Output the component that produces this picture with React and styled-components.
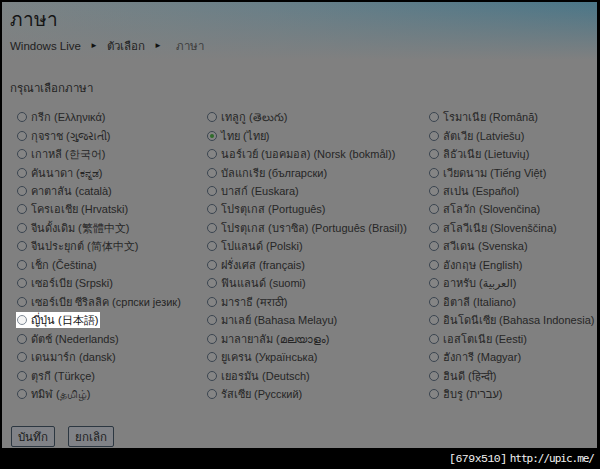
import React from 'react';
import styled, { createGlobalStyle } from 'styled-components';

const GlobalStyle = createGlobalStyle`
  html, body {
    margin: 0;
    padding: 0;
    background: #000;
  }
  body {
    font-family: "Liberation Sans", "DejaVu Sans", sans-serif;
  }
`;

const columns = [
  [
    'กรีก (Ελληνικά)',
    'กุจราช (ગુજરાતી)',
    'เกาหลี (한국어)',
    'คันนาดา (ಕನ್ನಡ)',
    'คาตาลัน (català)',
    'โครเอเชีย (Hrvatski)',
    'จีนดั้งเดิม (繁體中文)',
    'จีนประยุกต์ (简体中文)',
    'เช็ก (Čeština)',
    'เซอร์เบีย (Srpski)',
    'เซอร์เบีย ซีริลลิค (српски језик)',
    'ญี่ปุ่น (日本語)',
    'ดัตช์ (Nederlands)',
    'เดนมาร์ก (dansk)',
    'ตุรกี (Türkçe)',
    'ทมิฬ (தமிழ்)',
  ],
  [
    'เทลูกู (తెలుగు)',
    'ไทย (ไทย)',
    'นอร์เวย์ (บอคมอล) (Norsk (bokmål))',
    'บัลแกเรีย (български)',
    'บาสก์ (Euskara)',
    'โปรตุเกส (Português)',
    'โปรตุเกส (บราซิล) (Português (Brasil))',
    'โปแลนด์ (Polski)',
    'ฝรั่งเศส (français)',
    'ฟินแลนด์ (suomi)',
    'มาราธี (मराठी)',
    'มาเลย์ (Bahasa Melayu)',
    'มาลายาลัม (മലയാളം)',
    'ยูเครน (Українська)',
    'เยอรมัน (Deutsch)',
    'รัสเซีย (Русский)',
  ],
  [
    'โรมาเนีย (Română)',
    'ลัตเวีย (Latviešu)',
    'ลิธัวเนีย (Lietuvių)',
    'เวียดนาม (Tiếng Việt)',
    'สเปน (Español)',
    'สโลวัก (Slovenčina)',
    'สโลวีเนีย (Slovenščina)',
    'สวีเดน (Svenska)',
    'อังกฤษ (English)',
    'อาหรับ (العربية)',
    'อิตาลี (Italiano)',
    'อินโดนีเซีย (Bahasa Indonesia)',
    'เอสโตเนีย (Eesti)',
    'ฮังการี (Magyar)',
    'ฮินดี (हिन्दी)',
    'ฮิบรู (עברית)',
  ],
];

const SELECTED = 'ไทย (ไทย)';
const HIGHLIGHTED = 'ญี่ปุ่น (日本語)';

export default function App() {
  return (
    <Frame>
      <GlobalStyle />
      <Panel>
        <Title>ภาษา</Title>
        <Crumbs>
          <span>Windows Live</span>
          <Arrow>►</Arrow>
          <span>ตัวเลือก</span>
          <Arrow>►</Arrow>
          <Current>ภาษา</Current>
        </Crumbs>
        <Prompt>กรุณาเลือกภาษา</Prompt>
        <Grid>
          {columns.map((col, i) => (
            <Column key={i}>
              {col.map(label => (
                <Row key={label}>
                  <Option $lit={label === HIGHLIGHTED}>
                    <Radio $lit={label === HIGHLIGHTED} $checked={label === SELECTED} />
                    {label}
                  </Option>
                </Row>
              ))}
            </Column>
          ))}
        </Grid>
        <Buttons>
          <Button>บันทึก</Button>
          <Button>ยกเลิก</Button>
        </Buttons>
      </Panel>
      <Footer>
        <Size>[679x510]</Size>
        <span>http://upic.me/</span>
      </Footer>
    </Frame>
  );
}

const Frame = styled.div`
  width: 600px;
  height: 469px;
  display: flex;
  flex-direction: column;
  background: #000;
  overflow: hidden;
`;

const Panel = styled.div`
  flex: 1;
  margin: 2px 3px 0 2px;
  padding: 0 0 0 8px;
  display: flex;
  flex-direction: column;
  color: #262626;
  background:
    linear-gradient(to bottom, rgba(128, 128, 128, 0) 0, #808080 58px),
    linear-gradient(to right, #7b8385 0%, #687f88 45%, #4a7688 100%);
`;

const Title = styled.div`
  margin-top: 6px;
  height: 24px;
  font-size: 19px;
  line-height: 24px;
  color: #141414;
`;

const Crumbs = styled.div`
  margin-top: 6px;
  display: flex;
  align-items: center;
  gap: 9px;
  font-size: 11.5px;
  line-height: 16px;
  color: #1e1e1e;
`;

const Arrow = styled.span`
  font-size: 8px;
  color: #111;
`;

const Current = styled.span`
  margin-left: 5px;
  color: #3c3c3c;
`;

const Prompt = styled.div`
  margin-top: 26px;
  font-size: 11.5px;
  line-height: 16px;
  color: #222;
`;

const Grid = styled.div`
  margin-top: 12px;
  display: grid;
  grid-template-columns: 190px 222px 1fr;
  padding-left: 7px;
`;

const Column = styled.div`
  display: flex;
  flex-direction: column;
`;

const Row = styled.div`
  height: 18.46px;
  display: flex;
  align-items: center;
`;

const Option = styled.span`
  display: inline-flex;
  align-items: center;
  gap: 4px;
  height: 16px;
  margin-left: -1px;
  padding: 0 2px 0 1px;
  font-size: 11px;
  white-space: nowrap;
  color: ${p => (p.$lit ? '#111' : '#262626')};
  background: ${p => (p.$lit ? '#fff' : 'transparent')};
`;

const Radio = styled.span`
  position: relative;
  box-sizing: border-box;
  width: 10px;
  height: 10px;
  flex: 0 0 10px;
  border-radius: 50%;
  border: 1px solid ${p => (p.$lit ? '#7f8a96' : '#3b4550')};
  background: ${p => (p.$lit ? '#f4f4f4' : '#858585')};

  &::after {
    content: '';
    display: ${p => (p.$checked ? 'block' : 'none')};
    position: absolute;
    left: 2px;
    top: 2px;
    width: 4px;
    height: 4px;
    border-radius: 50%;
    background: #2f6b2a;
  }
`;

const Buttons = styled.div`
  margin-top: auto;
  margin-bottom: 1px;
  display: flex;
  gap: 13px;
  padding-left: 1px;
`;

const Button = styled.button`
  height: 21px;
  min-width: 44px;
  padding: 0 6px;
  border: 1px solid #2c3741;
  border-radius: 2px;
  background: #808287;
  font-family: "Liberation Sans", "DejaVu Sans", sans-serif;
  font-size: 11.5px;
  color: #1a1a1a;
`;

const Footer = styled.div`
  height: 21px;
  padding-right: 6px;
  display: flex;
  align-items: center;
  justify-content: flex-end;
  gap: 3px;
  font-family: "DejaVu Sans Mono", monospace;
  font-size: 11px;
  letter-spacing: -1px;
  color: #f2f2f2;
`;

const Size = styled.span`
  letter-spacing: -0.5px;
  font-family: "Liberation Mono", monospace;
  font-size: 11.5px;
`;
